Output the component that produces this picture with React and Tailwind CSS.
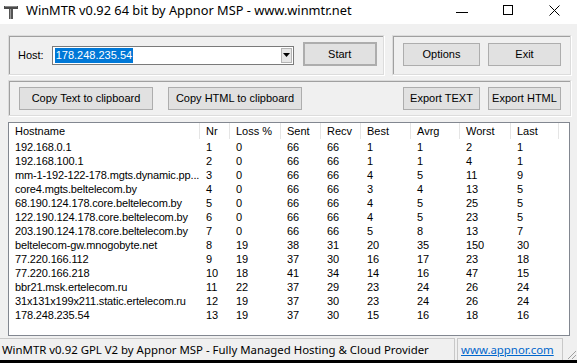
import React from 'react';

const rows = [
  ['192.168.0.1', 1, 0, 66, 66, 1, 1, 2, 1],
  ['192.168.100.1', 2, 0, 66, 66, 1, 1, 4, 1],
  ['mm-1-192-122-178.mgts.dynamic.pp...', 3, 0, 66, 66, 4, 5, 11, 9],
  ['core4.mgts.beltelecom.by', 4, 0, 66, 66, 3, 4, 13, 5],
  ['68.190.124.178.core.beltelecom.by', 5, 0, 66, 66, 4, 5, 25, 5],
  ['122.190.124.178.core.beltelecom.by', 6, 0, 66, 66, 4, 5, 23, 5],
  ['203.190.124.178.core.beltelecom.by', 7, 0, 66, 66, 5, 8, 13, 7],
  ['beltelecom-gw.mnogobyte.net', 8, 19, 38, 31, 20, 35, 150, 30],
  ['77.220.166.112', 9, 19, 37, 30, 16, 17, 23, 18],
  ['77.220.166.218', 10, 18, 41, 34, 14, 16, 47, 15],
  ['bbr21.msk.ertelecom.ru', 11, 22, 37, 29, 23, 24, 26, 24],
  ['31x131x199x211.static.ertelecom.ru', 12, 19, 37, 30, 23, 24, 26, 24],
  ['178.248.235.54', 13, 19, 37, 30, 15, 16, 18, 16],
];

// column widths measured off the header separators
const columns = [
  { name: 'Hostname', w: 'w-[191px]' },
  { name: 'Nr', w: 'w-[30px]' },
  { name: 'Loss %', w: 'w-[51px]' },
  { name: 'Sent', w: 'w-[40px]' },
  { name: 'Recv', w: 'w-[40px]' },
  { name: 'Best', w: 'w-[50px]' },
  { name: 'Avrg', w: 'w-[49px]' },
  { name: 'Worst', w: 'w-[51px]' },
  { name: 'Last', w: 'w-[48px]' },
];

const Button = ({ children, className = '' }) => (
  <button
    type="button"
    className={`flex items-center justify-center bg-[#e1e1e1] border border-[#adadad] text-black text-[11px] leading-none ${className}`}
  >
    {children}
  </button>
);

const GroupBox = ({ children, className = '' }) => (
  <div className={`flex items-center border border-[#dcdcdc] shadow-[inset_1px_1px_0_#a0a0a0,1px_1px_0_#fff] ${className}`}>
    {children}
  </div>
);

const AppIcon = () => (
  <svg width="14" height="14" viewBox="0 0 14 14" className="ml-[4px]">
    <rect x="0" y="1" width="14" height="3" fill="#4a4a4a" />
    <rect x="1" y="1" width="12" height="1" fill="#8a8a8a" />
    <rect x="5" y="4" width="4" height="10" fill="#555" />
    <rect x="6" y="4" width="1" height="10" fill="#9a9a9a" />
  </svg>
);

const App = () => {
  return (
    <div className="w-[577px] h-[363px] bg-[#f0f0f0] flex flex-col overflow-hidden font-['Liberation_Sans',Arial,sans-serif] text-black">
      {/* title bar */}
      <div className="h-[24px] bg-white flex items-center shrink-0">
        <AppIcon />
        <span className="ml-[8px] text-[12.8px] font-['Noto_Sans',sans-serif] text-black leading-none -mt-[4px]">
          WinMTR v0.92 64 bit by Appnor MSP - www.winmtr.net
        </span>
        <div className="ml-auto flex items-center h-full -mt-[4px]">
          <div className="w-[46px] flex justify-center">
            <div className="w-[12px] h-px bg-black mt-[4px]" />
          </div>
          <div className="w-[46px] flex justify-center">
            <div className="w-[10px] h-[10px] border border-black" />
          </div>
          <div className="w-[46px] flex justify-center">
            <svg width="11" height="11" viewBox="0 0 11 11">
              <path d="M0.5 0.5 L10.5 10.5 M10.5 0.5 L0.5 10.5" stroke="#000" strokeWidth="1" />
            </svg>
          </div>
        </div>
      </div>

      <div className="pl-[8px] pt-[11px] flex flex-col">
        <div className="flex">
          <GroupBox className="w-[376px] h-[40px] pl-[9px]">
            <span className="text-[11px]">Host:</span>
            <div className="ml-[8px] w-[242px] h-[19px] bg-white border border-[#7a7a7a] flex items-center pl-[2px] pr-px">
              <span className="bg-[#0078d7] text-white text-[11px] leading-[15px] px-px">178.248.235.54</span>
              <div className="ml-auto w-[11px] h-[15px] bg-[#e6e6e6] border border-[#b4b4b4] flex items-center justify-center">
                <svg width="7" height="4" viewBox="0 0 7 4">
                  <path d="M0 0 H7 L3.5 4 Z" fill="#000" />
                </svg>
              </div>
            </div>
            <Button className="ml-[9px] w-[74px] h-[24px] border-2 border-[#6e6e6e] -mt-[2px]">Start</Button>
          </GroupBox>
          <GroupBox className="ml-[8px] w-[179px] h-[40px] pl-[10px]">
            <Button className="w-[77px] h-[23px] -mt-px">Options</Button>
            <Button className="ml-[8px] w-[73px] h-[23px] -mt-px">Exit</Button>
          </GroupBox>
        </div>

        <GroupBox className="mt-[5px] w-[563px] h-[36px] pl-[10px]">
          <Button className="w-[134px] h-[23px]">Copy Text to clipboard</Button>
          <Button className="ml-[15px] w-[134px] h-[23px]">Copy HTML to clipboard</Button>
          <Button className="ml-[101px] w-[77px] h-[23px]">Export TEXT</Button>
          <Button className="ml-[8px] w-[73px] h-[23px]">Export HTML</Button>
        </GroupBox>

        {/* results list */}
        <div className="mt-[6px] w-[562px] h-[214px] bg-white border border-[#828790] overflow-hidden">
          <div className="flex h-[16px]">
            {columns.map((c) => (
              <div key={c.name} className={`${c.w} shrink-0 h-full border-r border-[#e5e5e5] pl-[6px] flex items-center text-[11px]`}>
                {c.name}
              </div>
            ))}
          </div>
          <div className="pt-px">
            {rows.map((r) => (
              <div key={r[1]} className="flex h-[14px] items-center">
                {r.map((v, i) => (
                  <div key={i} className={`${columns[i].w} shrink-0 pl-[6px] text-[11px] leading-[14px] tracking-[-0.15px] whitespace-nowrap`}>
                    {v}
                  </div>
                ))}
              </div>
            ))}
          </div>
        </div>
      </div>

      {/* status bar */}
      <div className="mt-auto h-[24px] flex shrink-0 font-['Noto_Sans',sans-serif] text-[11.4px] relative">
        <div className="w-[455px] border-t border-r border-[#c8c8c8] flex items-center pl-[2px] mt-[2px]">
          WinMTR v0.92 GPL V2 by Appnor MSP - Fully Managed Hosting &amp; Cloud Provider
        </div>
        <div className="ml-[2px] w-[106px] border-t border-l border-r border-[#c8c8c8] flex items-center pl-[3px] mt-[2px]">
          <span className="text-[#0066cc] underline">www.appnor.com</span>
        </div>
        <svg width="12" height="12" viewBox="0 0 12 12" className="absolute right-0 bottom-0">
          <path d="M11 3 L3 11 M11 7 L7 11" stroke="#a0a0a0" strokeWidth="1" />
        </svg>
      </div>
      <div className="h-[3px] bg-black shrink-0" />
    </div>
  );
};

export default App;
